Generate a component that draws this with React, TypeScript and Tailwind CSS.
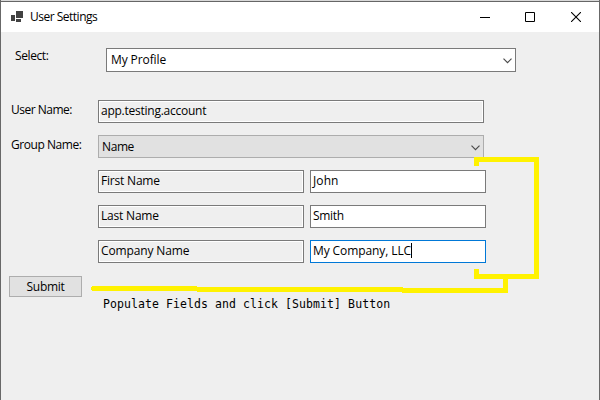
import type { ReactNode } from 'react';

function Chevron() {
  return (
    <svg className="mr-[3px] mt-0.5 shrink-0" width="9" height="6" viewBox="0 0 9 6" fill="none" stroke="#4a4a4a" strokeWidth="1.15">
      <path d="M0.5 0.7 4.5 4.7 8.5 0.7" />
    </svg>
  );
}

function ReadOnly({ children, className = '' }: { children: ReactNode; className?: string }) {
  return (
    <div className={`h-[23px] border border-[#7a7a7a] bg-white p-px ${className}`}>
      <div className="h-full whitespace-nowrap bg-[#efefef] pl-px leading-[18px]">{children}</div>
    </div>
  );
}

function Field({ label, value, track, valueTrack, focused = false }: { label: string; value: string; track: string; valueTrack: string; focused?: boolean }) {
  return (
    <div className="flex gap-1.5">
      <ReadOnly className={`w-[206px] ${track}`}>{label}</ReadOnly>
      <div className={`flex h-[23px] w-[176px] items-start border bg-white pl-0.5 ${focused ? 'border-[#0078d7]' : 'border-[#7a7a7a]'}`}>
        <span className={`whitespace-nowrap leading-5 ${valueTrack}`}>{value}</span>
        {focused && <span className="mt-0.5 h-[15px] w-px bg-black" />}
      </div>
    </div>
  );
}

export default function App() {
  return (
    <div className="relative flex h-[400px] w-[600px] flex-col overflow-hidden border-x border-[#686868] bg-[#efefef] font-['Open_Sans','Noto_Sans',sans-serif] text-[12px] text-black">
      <div className="h-px shrink-0 bg-[#d9d9d9]" />
      <header className="flex h-[31px] shrink-0 items-center border-t border-[#666666] bg-white pl-[10px] pr-[18px]">
        <svg className="-mt-px" width="12" height="11" viewBox="0 0 12 11" fill="#424242" shapeRendering="crispEdges">
          <path d="M5 0h7v7H5zM0 4h4v6H0zM5 8h5v3H5z" />
        </svg>
        <h1 className="ml-[7px] whitespace-nowrap leading-4 tracking-[-0.5px]">User Settings</h1>
        <div className="ml-auto flex gap-[35px]">
          <svg width="10" height="10" viewBox="0 0 10 10"><path d="M0 5h10v1H0z" /></svg>
          <svg width="10" height="10" viewBox="0 0 10 10" fill="none" stroke="#000"><path d="M.5.5h9v9h-9z" /></svg>
          <svg className="ml-px" width="10" height="10" viewBox="0 0 10 10" stroke="#000" strokeWidth="1.1"><path d="m0 0 10 10M10 0 0 10" /></svg>
        </div>
      </header>
      <main>
        <div className="flex pl-[14px] pt-4">
          <label className="w-[91px] leading-4 tracking-[-0.4px]">Select:</label>
          <div className="flex h-6 w-[410px] items-center justify-between border border-[#7a7a7a] bg-white pl-1">
            <span className="leading-[22px] tracking-[-0.1px]">My Profile</span>
            <Chevron />
          </div>
        </div>
        <div className="mt-7 flex pl-[10px]">
          <label className="w-[87px] pt-0.5 leading-4 tracking-[-0.5px]">User Name:</label>
          <ReadOnly className="w-[386px] tracking-[-0.25px]">app.testing.account</ReadOnly>
        </div>
        <div className="mt-3 flex pl-[10px]">
          <label className="w-[87px] pt-0.5 leading-4 tracking-[-0.45px]">Group Name:</label>
          <div className="flex h-[23px] w-[386px] items-center justify-between border border-[#adadad] bg-[#e1e1e1] pl-[3px]">
            <span className="leading-[22px] tracking-[-0.4px]">Name</span>
            <Chevron />
          </div>
        </div>
        <div className="ml-[97px] mt-3 flex flex-col gap-3">
          <Field label="First Name" value="John" track="tracking-[-0.2px]" valueTrack="tracking-[0.1px]" />
          <Field label="Last Name" value="Smith" track="tracking-[-0.2px]" valueTrack="tracking-[-0.3px]" />
          <Field label="Company Name" value="My Company, LLC" track="tracking-[-0.13px]" valueTrack="tracking-[-0.1px]" focused />
        </div>
        <div className="mt-[13px] flex pl-2">
          <button className="h-[21px] w-[73px] border border-[#adadad] bg-[#e1e1e1] leading-[19px] tracking-[-0.3px]">Submit</button>
          <p className="ml-[21px] mt-5 whitespace-pre font-['DejaVu_Sans_Mono',monospace] text-[11.5px] leading-4 tracking-[0.08px]">Populate Fields and click [Submit] Button</p>
        </div>
      </main>
      <svg className="pointer-events-none absolute -left-px top-0" width="600" height="400" viewBox="0 0 600 400" fill="#fff200" shapeRendering="crispEdges">
        <path d="M474 157h65v122h-31v14H402v-1H197v-1H92v-1h-1v-3h1v-1h105v1h206v1h100v-9h-29v-10h5v5h55V162h-55v4h-5z" />
      </svg>
    </div>
  );
}
